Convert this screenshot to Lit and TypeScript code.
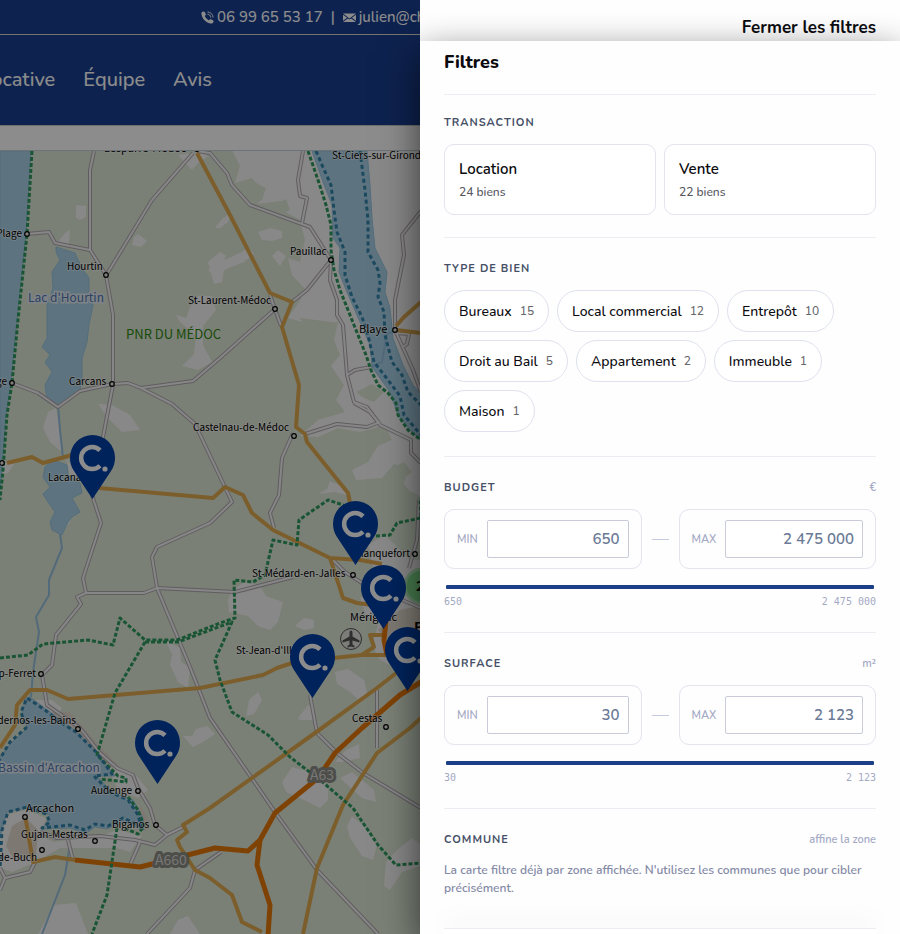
import { LitElement, html, svg, css } from "lit";
import { customElement, property } from "lit/decorators.js";

type Point = [number, number];
type Place = { name: string; x: number; y: number; dot?: Point; anchor?: string; size?: number };

const LIGHT_AREAS = [
  "232,150 240,166 235,183 252,178 262,190 258,204 280,201 286,212 300,220 305,240 300,262 288,258 292,275 306,290 299,302 288,318 310,324 338,322 334,340 340,355 331,366 344,385 336,400 345,412 318,420 300,436 318,437 338,428 360,432 385,425 392,440 378,446 368,462 352,470 356,480 382,478 394,464 408,468 404,484 414,496 420,500 420,150",
  "76,205 86,206 86,217 80,220 76,218",
  "134,237 138,234 147,241 141,247 132,245",
  "58,242 66,232 70,230 69,244 63,247",
  "178,155 200,152 208,156 197,164 192,170",
  "215,228 222,219 232,212 228,222 220,228",
  "208,270 220,262 242,252 248,247 254,254 244,262 224,270 222,282 214,276",
  "258,232 270,228 282,231 282,238 272,241 262,240",
  "272,256 278,250 286,256 280,266",
  "190,307 198,296 212,296 216,310 203,326 203,345 212,362 198,370 182,366 194,354 196,336 180,322 176,315 186,318",
  "208,262 220,252 226,256 220,270 222,282 214,284",
  "56,408 48,412 43,428 50,442 62,452 60,430",
  "98,404 112,405 130,415 140,430 122,432 108,418",
  "3,463 15,463 8,473 0,474",
  "66,458 75,470 79,482 71,481",
  "62,532 62,522 72,512 70,522",
  "318,494 327,489 330,481 345,488 350,496 335,492",
  "232,590 245,582 260,586 266,596 283,602 278,622 270,630 258,626 248,616 229,612 228,600",
  "295,626 304,618 314,620 314,628 304,630",
  "170,665 172,655 190,668 188,688 178,682",
  "165,640 180,648 182,672 174,672 173,656",
  "183,736 192,736 196,729 207,726 215,734 203,742 193,747",
  "335,672 348,669 364,680 368,696 361,702 350,692 337,684",
  "246,716 249,700 258,692 262,700 254,714",
  "298,718 308,705 315,710 314,720 300,720",
  "282,782 292,767 320,775 328,786 328,800 320,808 304,800 286,792",
  "335,762 346,750 359,744 360,758 342,762",
  "340,778 352,772 374,790 376,802 362,798",
  "347,826 352,816 366,828 377,845 373,860 362,856 350,838",
  "386,862 397,850 412,838 420,844 420,866 402,872 390,890 384,886",
  "360,598 372,590 392,600 420,600 420,660 396,668 380,660 372,645 378,625 366,615",
  "368,545 385,535 410,560 420,560 420,600 390,600 375,575",
  "35,700 52,700 62,708 56,716 48,712",
  "105,762 132,772 140,780 148,790 138,798 118,790",
  "5,815 26,810 46,818 40,836 54,842 100,836 118,830 142,836 130,852 116,848 60,848 36,862 12,872 0,868 0,828",
  "54,905 76,903 88,934 38,934",
  "178,920 188,916 196,928 200,934 170,934",
];

const URBAN_AREAS = [
  "52,712 70,712 96,742 118,765 110,768 92,752 78,732 60,722",
  "12,826 26,818 38,830 36,856 14,860 6,846",
  "130,806 142,808 150,822 146,832 136,820",
  "378,630 400,610 420,606 420,640 396,648",
];

const GREEN_AREAS = [
  "232,198 246,190 254,182 266,188 262,200 248,208",
  "275,204 286,199 290,210 280,215",
  "300,318 332,322 330,334 320,342 312,338",
  "356,392 372,384 384,392 374,402 364,398",
  "400,500 412,492 420,496 420,548 408,540",
  "392,468 404,462 412,472 402,480",
];

const WATERS = [
  "0,151 31,151 26,234 17,320 11,383 6,415 2,470 0,490",
  "56,247 75,253 82,268 89,278 89,292 93,305 89,325 87,342 82,358 82,378 80,390 67,400 58,407 47,400 45,385 52,372 45,362 50,355 42,347 47,338 47,305 53,288 52,272 60,260 56,252",
  "45,467 53,460 67,465 68,475 80,483 82,493 72,498 80,512 72,517 68,522 62,535 52,530 50,522 55,512 48,502 43,494 50,487 43,477",
  "312,151 323,182 332,205 333,238 340,248 339,272 347,292 360,322 370,345 372,367 390,392 398,415 410,430 421,441 421,394 413,385 403,365 393,338 390,308 385,292 387,272 375,248 372,218 370,185 367,151",
  "30,697 50,712 77,732 97,753 115,776 97,776 110,790 133,800 143,818 144,830 123,822 107,829 95,827 85,834 70,828 43,829 50,815 27,808 7,812 2,830 -4,850 -4,762 10,744 27,728 22,712 25,698",
];

const STREAMS = [
  "58,405 60,430 63,458",
  "60,534 62,548 49,580 49,595 36,617 39,632 33,672 31,697",
  "70,845 65,875 42,934",
  "371,367 382,362 385,345 387,334 395,331",
];

const ROADS = [
  "94,151 90,170 90,250 106,275 113,315 113,385 103,437 92,495 101,523 83,578 86,593 77,597 81,604 56,635 52,665 42,675 47,705 80,728 100,753 117,768 133,775 138,788 150,808 155,825 167,835",
  "193,153 152,200 107,274",
  "27,234 49,232 55,243 90,250",
  "12,383 38,393 58,407 80,391 112,384 128,383 141,388 172,404 195,424 232,502 210,523 157,547 152,557 157,588 190,667 210,718 253,780 277,815 317,870 378,934",
  "141,388 193,381 220,358 275,309",
  "275,309 270,295",
  "275,309 281,326",
  "86,593 144,593 157,588 235,592 293,577",
  "197,151 210,153 227,173 232,185 250,205 310,227 331,260 330,280 337,300 337,315 343,325 347,375 354,402 367,407 380,425 411,440 411,453 421,463",
  "303,151 298,180 300,196 307,198 302,223",
  "331,260 307,290 292,302",
  "421,211 402,235 404,255 395,300 395,330 413,370 421,392",
  "395,333 409,334 407,344 403,347",
  "347,375 355,370 371,367",
  "293,433 282,458 279,495 270,513 274,528",
  "305,434 337,424 367,427 380,422",
  "354,403 370,412 380,424",
  "333,560 345,572 365,585",
  "402,600 421,608",
  "419,500 417,540 409,568",
  "377,690 377,748",
  "310,695 317,733 337,753 363,773 421,808",
  "147,934 190,888 195,870 221,852",
  "40,832 57,838 100,836 135,840 155,845 167,835 183,827",
  "140,842 130,865",
  "68,840 73,860",
  "35,862 30,872 5,878 0,868",
  "5,878 0,890",
];

const MAIN_ROADS = [
  "197,153 230,215 270,293 292,302 282,327 299,385 296,427 305,434 307,442 348,493 351,508",
  "7,463 32,457 43,463 72,455",
  "99,488 213,498 225,487 243,495 252,513 273,530 330,558 360,560 382,564",
  "330,558 343,598 357,603 372,605",
  "0,748 15,725 17,705 30,690 47,690 68,699 200,688 263,675 277,668 295,662 362,655 386,655",
  "210,808 315,733 377,688 400,670",
  "303,934 317,868 343,805 377,753 410,728 421,718",
  "210,808 183,825 187,832 177,840 180,847 195,870 210,878 232,895 242,922 262,932",
  "25,815 33,862 55,857 75,860",
  "384,635 370,635 374,647 362,655",
  "396,326 404,317 421,302",
  "396,330 421,333",
];

const MOTORWAYS = [
  "75,860 140,867 160,862 215,848 248,851 260,840 275,813 318,778 335,753 362,728 400,695 421,682",
  "260,840 257,865 270,905 268,936",
  "386,620 384,640 387,655",
];

const PARK_BORDERS = [
  "32,151 27,234 18,320 12,383 7,415 3,470 0,500",
  "308,151 318,180 326,205 331,225 331,250 334,270 340,290 350,315 358,335 366,355 371,370 378,385 388,393 396,403 398,415 408,430 421,440",
  "0,658 28,655 43,644 88,640 113,645 120,618 145,640 177,640 220,623 235,618 234,580 253,582 265,575 273,540 297,545 299,520 328,500 346,506",
  "376,536 390,535 397,523 421,518 420,498",
  "145,642 178,642 232,622 215,660 220,680 232,712 268,735 290,757 320,780 353,808 378,845 396,865 421,863",
  "145,642 115,693 97,755 118,776 126,778 126,782 100,779",
  "128,797 138,810 144,826 138,834 124,828",
  "117,828 107,895 92,934",
];

const COAST_BORDERS = [
  "316,151 322,165 331,185 334,210 337,232 345,252 345,275 352,297 362,317 368,335 374,362 388,380 400,396 404,415 421,435",
  "360,151 365,190 368,220 368,252 378,270 380,283 378,297 384,312 385,335 392,362 402,375 408,392 421,405",
  "-2,762 10,742 26,728 21,712 27,698 45,710 60,722 76,732 96,752 112,774 94,776 110,792 128,800 138,815 141,826 123,818 108,826 95,824 85,830 70,825 42,828 50,822 46,814 27,807 8,812 2,830 0,868",
];

const PLACES: Place[] = [
  { name: "Lesparre-Médoc", x: 104, y: 152, dot: [197, 149], size: 11 },
  { name: "St-Ciers-sur-Gironde", x: 332, y: 159 },
  { name: "Plage", x: 22, y: 237, dot: [27, 234], anchor: "end" },
  { name: "Hourtin", x: 67, y: 270, dot: [106, 275] },
  { name: "Pauillac", x: 290, y: 255, dot: [331, 260] },
  { name: "St-Laurent-Médoc", x: 188, y: 304, dot: [275, 309] },
  { name: "Blaye", x: 359, y: 333, dot: [395, 330], size: 11 },
  { name: "ge", x: 7, y: 385, dot: [12, 383], anchor: "end" },
  { name: "Carcans", x: 69, y: 385, dot: [112, 384] },
  { name: "Castelnau-de-Médoc", x: 193, y: 431, dot: [294, 436] },
  { name: "Lacanau", x: 48, y: 481, dot: [2, 463] },
  { name: "Blanquefort", x: 410, y: 557, dot: [415, 554], anchor: "end" },
  { name: "St-Médard-en-Jalles", x: 252, y: 577, dot: [353, 575] },
  { name: "Mérignac", x: 350, y: 621, size: 11 },
  { name: "St-Jean-d'Illac", x: 236, y: 654 },
  { name: "Cap-Ferret", x: 36, y: 677, dot: [41, 674], anchor: "end" },
  { name: "Andernos-les-Bains", x: 76, y: 724, dot: [78, 729], anchor: "end" },
  { name: "Cestas", x: 352, y: 722, dot: [386, 727] },
  { name: "Audenge", x: 91, y: 794, dot: [138, 791] },
  { name: "Arcachon", x: 26, y: 812, dot: [25, 817], size: 11 },
  { name: "Biganos", x: 112, y: 828, dot: [156, 825] },
  { name: "Gujan-Mestras", x: 21, y: 838, dot: [95, 841] },
  { name: "La Teste-de-Buch", x: 37, y: 861, dot: [42, 850], anchor: "end" },
];

const PINS: Point[] = [
  [92, 457],
  [355, 523],
  [383, 587],
  [407, 649],
  [312, 656],
  [157, 742],
];

const lines = (cls: string, list: string[]) =>
  list.map((points) => svg`<polyline class=${cls} points=${points} />`);
const shapes = (cls: string, list: string[]) =>
  list.map((points) => svg`<polygon class=${cls} points=${points} />`);

@customElement("property-map")
export class PropertyMap extends LitElement {
  static styles = css`
    :host { display: block; overflow: hidden; background: #dfe9d7; }
    svg { display: block; width: 100%; height: 100%; font-family: "Noto Sans CJK SC", "Noto Sans", sans-serif; }
    .light { fill: #f9f8f7; }
    .urban { fill: #e4ddd0; }
    .green { fill: #dfe9d7; }
    .water { fill: #a9d3ea; stroke: #9ac8e2; stroke-width: 1; }
    polyline { fill: none; stroke-linejoin: round; }
    .stream { stroke: #96c2df; stroke-width: 2; }
    .road-case { stroke: #b0a9b0; stroke-width: 4; }
    .road { stroke: #f6f4f4; stroke-width: 2; }
    .main { stroke: #e0ac50; stroke-width: 4; }
    .motorway { stroke: #e8780a; stroke-width: 5; }
    .park { stroke: #2f9c60; stroke-width: 3; stroke-dasharray: 4 2; }
    .coast { stroke: #3385ac; stroke-width: 3; stroke-dasharray: 4 3; }
    .dot { fill: #e8e8e4; stroke: #000; stroke-width: 1.2; }
    .place { fill: #000; stroke: rgba(255, 255, 255, 0.6); stroke-width: 1.5; paint-order: stroke; }
    .lake { fill: #4f79b5; stroke: #e6edf4; stroke-width: 3; paint-order: stroke; font-size: 12px; }
    .park-name { fill: #2f8a10; font-size: 13px; }
    .shield { fill: #d8d8d4; stroke: #8c8c86; stroke-width: 6; paint-order: stroke; font-size: 14px; stroke-linejoin: round; }
    .cluster { fill: #82e08c; stroke: #b8ecbd; stroke-width: 3; }
    .strong { font-weight: 700; fill: #000; font-size: 14px; }
    .pin { fill: #0040a8; }
    .pin-c { fill: none; stroke: #fff; stroke-width: 4.5; }
    .pin-dot { fill: #fff; }
    .airport { fill: #e2e2dc; stroke: #555; stroke-width: 1; }
    .plane { fill: #555; }
  `;

  render() {
    return html`<svg role="img" aria-label="Carte des biens">
      <g transform="translate(0 -151)">
        ${shapes("light", LIGHT_AREAS)} ${shapes("urban", URBAN_AREAS)} ${shapes("green", GREEN_AREAS)}
        ${shapes("water", WATERS)} ${lines("stream", STREAMS)}
        ${lines("road-case", ROADS)} ${lines("road", ROADS)}
        ${lines("main", MAIN_ROADS)} ${lines("motorway", MOTORWAYS)}
        ${lines("park", PARK_BORDERS)} ${lines("coast", COAST_BORDERS)}
        <circle class="airport" cx="351" cy="639" r="10.500" />
        <path class="plane" d="M351 630.500c1 0 1.500 1 1.500 2.500v3.500l7 4v2l-7-2v4l2 1.500v1.500l-3.500-1-3.500 1v-1.500l2-1.500v-4l-7 2v-2l7-4v-3.500c0-1.500.5-2.500 1.500-2.500z" />
        ${PLACES.map((p) => svg`
          ${p.dot ? svg`<circle class="dot" cx=${p.dot[0]} cy=${p.dot[1]} r="2.300" />` : null}
          <text class="place" x=${p.x} y=${p.y} font-size=${p.size ?? 10} text-anchor=${p.anchor ?? "start"}>${p.name}</text>`)}
        <text class="lake" x="28" y="302">Lac d'Hourtin</text>
        <text class="lake" x="-2" y="772">Bassin d'Arcachon</text>
        <text class="park-name" x="126" y="339">PNR DU MÉDOC</text>
        <text class="shield" x="155" y="865">A660</text>
        <text class="shield" x="310" y="780">A63</text>
        <circle class="cluster" cx="422" cy="586" r="17" />
        <text class="strong" x="416" y="591">2</text>
        <text class="strong" x="414" y="633">B</text>
        ${PINS.map(([x, y]) => svg`<g transform="translate(${x} ${y})">
          <path class="pin" d="M0.500 42 L-18 14 C-21 9.500 -22 5 -22 0.500 A22.500 22.500 0 0 1 23 0.500 C23 5 22 9.500 19 14 Z" />
          <path class="pin-c" d="M8 -6.700 A11 11 0 1 0 8 8.700" />
          <circle class="pin-dot" cx="13" cy="12" r="2.600" />
        </g>`)}
      </g>
    </svg>`;
  }
}

@customElement("range-filter")
export class RangeFilter extends LitElement {
  @property() name = "";
  @property() unit = "";
  @property() low = "";
  @property() high = "";

  static styles = css`
    :host { display: block; }
    .head { display: flex; justify-content: space-between; line-height: 18px; margin-bottom: 12px; }
    h3 { margin: 0; font-size: 11px; font-weight: 700; letter-spacing: 1px; color: #465066; text-transform: uppercase; }
    .unit { font-size: 11px; font-weight: 600; color: #a4a9c4; }
    .pair { display: grid; grid-template-columns: minmax(0, 1fr) 17px minmax(0, 1fr); column-gap: 10px; align-items: center; }
    .dash { height: 1px; background: #c6cae0; }
    .box { display: flex; align-items: center; gap: 9px; height: 60px; padding: 0 12px; border: 1px solid #e2e4ee; border-radius: 10px; box-sizing: border-box; font-size: 11px; font-weight: 600; color: #a4a9c4; }
    .box input { flex: 1; min-width: 0; height: 38px; box-sizing: border-box; padding: 0 8px; border: 1px solid #c9ccd8; border-radius: 2px; background: #fff; color: #6b7a96; font: 600 15px "Nunito", "Noto Sans", sans-serif; text-align: right; }
    .sliders { display: grid; margin: 16px 2px 5px; }
    .sliders input { grid-area: 1 / 1; appearance: none; width: 100%; height: 4px; margin: 0; border-radius: 2px; background: #1c3f87; }
    .sliders input::-webkit-slider-thumb { appearance: none; width: 4px; height: 4px; border-radius: 2px; background: #1c3f87; }
    .bounds { display: flex; justify-content: space-between; font: 10px/16px "DejaVu Sans Mono", "Liberation Mono", monospace; color: #a4a9c4; }
  `;

  render() {
    return html`
      <div class="head"><h3>${this.name}</h3><span class="unit">${this.unit}</span></div>
      <div class="pair">
        <label class="box">MIN<input type="text" .value=${this.low} /></label>
        <span class="dash"></span>
        <label class="box">MAX<input type="text" .value=${this.high} /></label>
      </div>
      <div class="sliders">
        <input type="range" aria-label="${this.name} minimum" value="0" min="0" max="100" />
        <input type="range" aria-label="${this.name} maximum" min="0" max="100" value="100" />
      </div>
      <div class="bounds"><span>${this.low}</span><span>${this.high}</span></div>
    `;
  }
}

const TRANSACTIONS = [
  { name: "Location", count: "24 biens" },
  { name: "Vente", count: "22 biens" },
];

const TYPES: [string, number][] = [
  ["Bureaux", 15],
  ["Local commercial", 12],
  ["Entrepôt", 10],
  ["Droit au Bail", 5],
  ["Appartement", 2],
  ["Immeuble", 1],
  ["Maison", 1],
];

@customElement("app-root")
export class AppRoot extends LitElement {
  static styles = css`
    :host { display: block; position: relative; height: 100vh; overflow: hidden; font-family: "Nunito", "Noto Sans", sans-serif; color: #0b0b0f; }
    button { font: inherit; color: inherit; cursor: pointer; }
    .page { display: flex; flex-direction: column; height: 100%; background: #fff; }
    .header { background: #1a3f91; color: #fff; border-bottom: 1px solid #c9c9c9; }
    .contact { display: flex; align-items: center; gap: 3px; height: 34px; padding-left: 201px; border-bottom: 1px solid #d9d2c8; font-size: 15px; font-weight: 500; white-space: nowrap; }
    .contact a { color: inherit; text-decoration: none; }
    .contact svg { width: 13px; height: 13px; fill: #fff; }
    .sep { margin: 0 5px; }
    .nav { display: flex; justify-content: flex-end; gap: 28px; width: 212px; height: 88px; padding-bottom: 2px; align-items: center; font-size: 20px; font-weight: 500; white-space: nowrap; }
    .nav a { color: inherit; text-decoration: none; }
    property-map { flex: 1; margin-top: 24px; border-top: 1px solid #c3d2d8; }
    .backdrop { position: absolute; inset: 0; background: rgba(0, 0, 0, 0.45); }
    .drawer { position: absolute; inset: 0 0 0 auto; display: flex; flex-direction: column; width: 480px; max-width: 100%; }
    .topbar { display: flex; justify-content: flex-end; align-items: flex-end; height: 41px; padding: 0 24px; box-sizing: border-box; background: #fff; }
    .close { position: relative; z-index: 1; padding: 0; border: 0; background: none; font-size: 17px; font-weight: 700; line-height: 26px; }
    .panel { flex: 1; min-height: 0; display: flex; flex-direction: column; background: #fefefe; box-shadow: 0 12px 36px rgba(0, 0, 0, 0.6); }
    .scroll { flex: 1; min-height: 0; overflow: hidden; padding: 0 24px; }
    h2 { margin: 0; padding: 6px 0 17px; font-size: 18px; font-weight: 800; line-height: 30px; }
    .section { padding: 22px 0; border-top: 1px solid #edeef3; }
    .section.first { padding-top: 19px; }
    .head { display: flex; justify-content: space-between; margin-bottom: 12px; line-height: 18px; }
    h3 { margin: 0; font-size: 11px; font-weight: 700; letter-spacing: 1px; color: #465066; text-transform: uppercase; }
    .hint { font-size: 11px; font-weight: 600; color: #a4a9c4; }
    .cards { display: grid; grid-template-columns: 1fr 1fr; gap: 8px; }
    .card { display: flex; flex-direction: column; gap: 2px; height: 71px; padding: 13px 14px; border: 1px solid #e2e4ee; border-radius: 10px; background: #fff; text-align: left; }
    .card-name { font-size: 15px; line-height: 22px; font-weight: 600; }
    .card-count { font-size: 12px; line-height: 20px; font-weight: 500; color: #55565c; }
    .chips { display: flex; flex-wrap: wrap; gap: 8px; padding-bottom: 2px; }
    .chip { display: flex; align-items: center; gap: 8px; height: 42px; padding: 0 14px; border: 1px solid #dfe2ee; border-radius: 21px; background: #fff; font-size: 14px; font-weight: 500; }
    .chip-count { font-size: 12px; color: #66676d; }
    .note { margin: 0; font-size: 12px; font-weight: 600; line-height: 18px; color: #8389a6; }
    .footer { height: 5px; margin: 0 24px; border-top: 1px solid #edeef3; background: #fff; box-shadow: 0 -6px 24px rgba(0, 0, 0, 0.08); }
  `;

  render() {
    return html`
      <div class="page">
        <header class="header">
          <div class="contact">
            <svg viewBox="0 0 16 16" aria-hidden="true">
              <path d="M2.800.6C1.300 1 .4 2 .5 3.500 1.200 9.800 6.200 14.800 12.500 15.500c1.500.1 2.500-.8 2.900-2.300.2-.7-.1-1.300-.7-1.700l-2.400-1.300c-.6-.3-1.200-.2-1.600.3l-.9 1.100C7.500 10.400 5.600 8.500 4.500 6.200l1.100-.9c.5-.4.600-1 .3-1.600L4.600 1.300C4.200.7 3.500.4 2.800.6Z" />
              <path d="M8 1.200c3.800 0 6.800 3 6.800 6.800M8 4c2.300 0 4 1.700 4 4" fill="none" stroke="#fff" stroke-width="1.200" />
            </svg>
            <a href="tel:0699655317">06 99 65 53 17</a>
            <span class="sep">|</span>
            <svg viewBox="0 0 16 16" aria-hidden="true">
              <path d="M0 3h16L8 9.200ZM0 4.500 5 8.300 0 12ZM16 4.500v7.500L11 8.300ZM6 9.100l2 1.500 2-1.500 6 4.400H0Z" />
            </svg>
            <a href="#contact">julien@ch</a>
          </div>
          <nav class="nav">
            <a href="#gestion">Gestion locative</a><a href="#equipe">Équipe</a><a href="#avis">Avis</a>
          </nav>
        </header>
        <property-map></property-map>
      </div>
      <div class="backdrop"></div>
      <aside class="drawer" aria-label="Filtres">
        <div class="topbar"><button class="close">Fermer les filtres</button></div>
        <div class="panel">
          <div class="scroll">
            <h2>Filtres</h2>
            <section class="section first">
              <div class="head"><h3>Transaction</h3></div>
              <div class="cards">
                ${TRANSACTIONS.map((t) => html`<button class="card"><span class="card-name">${t.name}</span><span class="card-count">${t.count}</span></button>`)}
              </div>
            </section>
            <section class="section">
              <div class="head"><h3>Type de bien</h3></div>
              <div class="chips">
                ${TYPES.map(([name, count]) => html`<button class="chip">${name}<span class="chip-count">${count}</span></button>`)}
              </div>
            </section>
            <section class="section"><range-filter name="Budget" unit="€" low="650" high="2 475 000"></range-filter></section>
            <section class="section"><range-filter name="Surface" unit="m²" low="30" high="2 123"></range-filter></section>
            <section class="section">
              <div class="head"><h3>Commune</h3><span class="hint">affine la zone</span></div>
              <p class="note">La carte filtre déjà par zone affichée. N'utilisez les communes que pour cibler précisément.</p>
            </section>
          </div>
          <footer class="footer"></footer>
        </div>
      </aside>
    `;
  }
}
